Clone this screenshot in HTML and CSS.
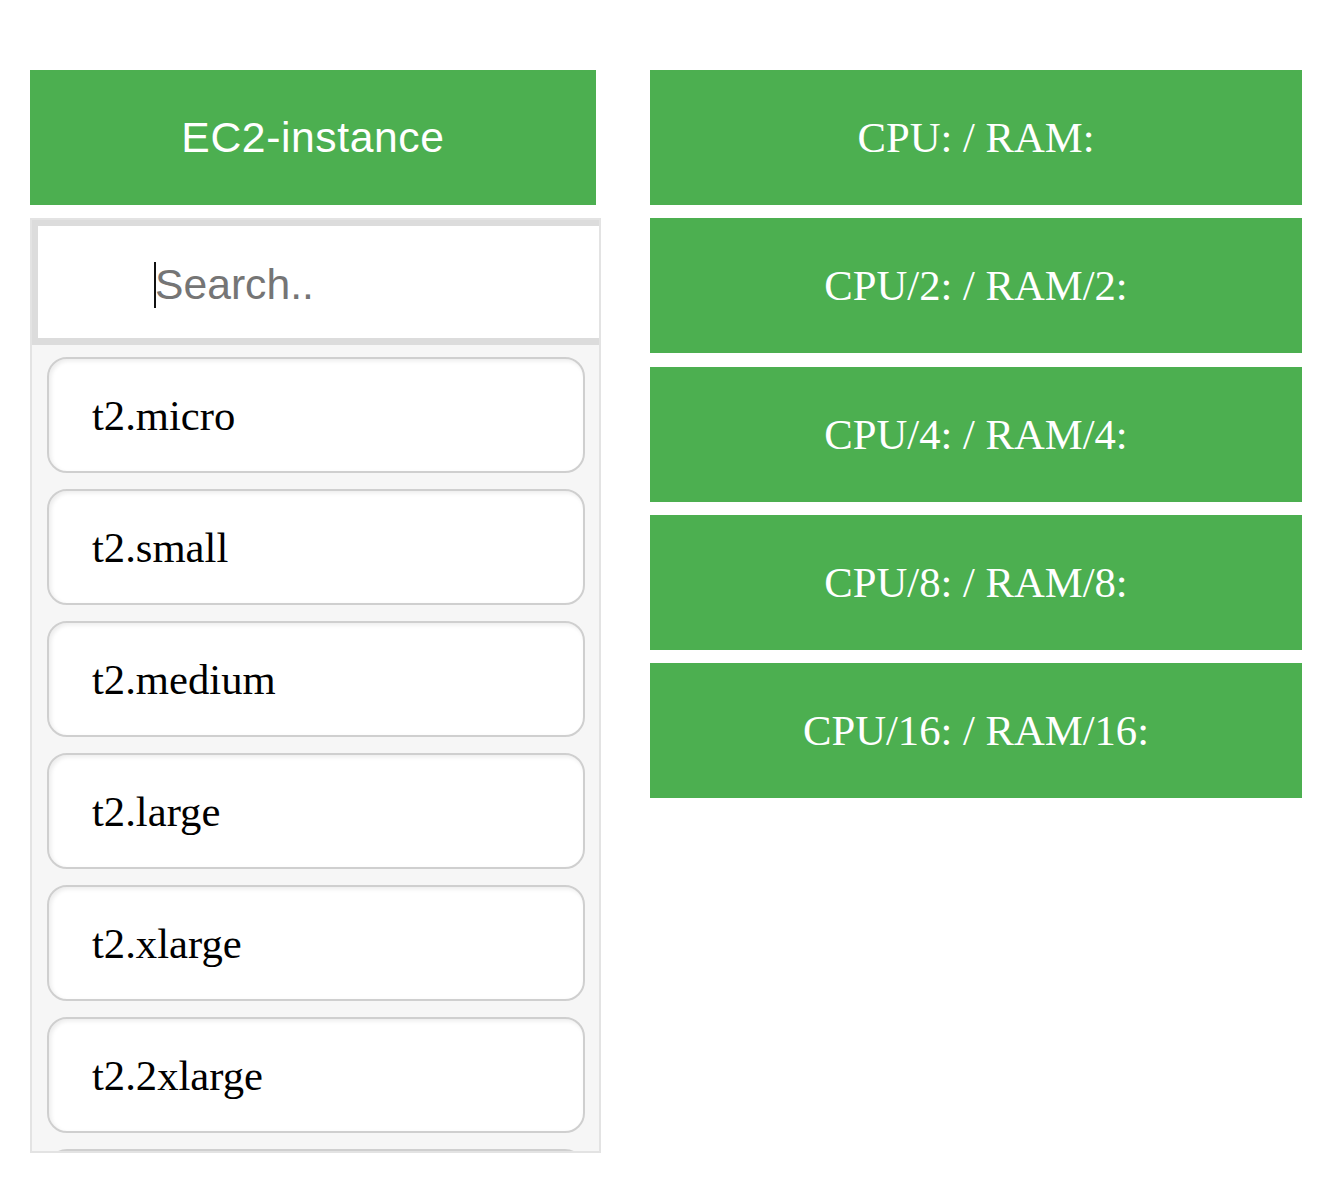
FILE: index.html
```html
<!DOCTYPE html>
<html lang="en">
<head>
    <meta charset="UTF-8">
    <meta name="viewport" content="width=device-width, initial-scale=1.0">
    <title>EC2 instance picker</title>
    <link rel="stylesheet" href="styles.css">
</head>
<body>

<div class="page">
    <div class="picker">
        <div class="title">EC2-instance</div>
        <div class="dropdown">
            <div class="search-wrap">
                <input type="text" class="search" placeholder="Search..">
                <span class="caret"></span>
            </div>
            <div class="options">
                <div class="option">t2.micro</div>
                <div class="option">t2.small</div>
                <div class="option">t2.medium</div>
                <div class="option">t2.large</div>
                <div class="option">t2.xlarge</div>
                <div class="option">t2.2xlarge</div>
                <div class="option"></div>
            </div>
        </div>
    </div>

    <div class="specs">
        <div class="spec">CPU: / RAM:</div>
        <div class="spec">CPU/2: / RAM/2:</div>
        <div class="spec">CPU/4: / RAM/4:</div>
        <div class="spec">CPU/8: / RAM/8:</div>
        <div class="spec">CPU/16: / RAM/16:</div>
    </div>
</div>

</body>
</html>
```

FILE: styles.css
```css
body {
    margin: 0;
    background-color: #fff;
    font-family: "Liberation Serif", "Times New Roman", serif;
}

.page {
    display: flex;
    align-items: flex-start;
    gap: 49px;
    padding: 70px 28px 0 30px;
}

.picker {
    width: 571px;
    flex-shrink: 0;
}

.title {
    width: 566px;
    height: 135px;
    margin-bottom: 13px;
    display: flex;
    align-items: center;
    justify-content: center;
    background-color: #4caf50;
    color: white;
    font-family: "Liberation Sans", Arial, sans-serif;
    font-size: 32pt;
    letter-spacing: 0.6px;
}

.dropdown {
    box-sizing: border-box;
    height: 935px;
    background-color: #f6f6f6;
    border: 2px solid #e3e3e3;
    overflow: hidden;
}

.search-wrap {
    position: relative;
}

.search {
    display: block;
    box-sizing: border-box;
    width: 100%;
    height: 125px;
    margin: 0;
    padding: 4px 0 0 117px;
    border-style: solid;
    border-color: #dcdcdc;
    border-width: 6px 0 7px 6px;
    outline: none;
    background: white;
    font-family: "Liberation Sans", Arial, sans-serif;
    font-size: 32pt;
    caret-color: transparent;
}

.search::placeholder {
    color: #757575;
}

.caret {
    position: absolute;
    left: 122px;
    top: 42px;
    width: 2px;
    height: 46px;
    background-color: #111;
}

.options {
    padding: 12px 14px 0 15px;
}

.option {
    box-sizing: border-box;
    height: 116px;
    margin-bottom: 16px;
    padding-left: 43px;
    display: flex;
    align-items: center;
    background-color: white;
    border: 2px solid #cfcfcf;
    border-radius: 20px;
    box-shadow: inset 2px 2px 4px rgba(0, 0, 0, 0.08);
    color: #000;
    font-size: 32pt;
}

.specs {
    flex: 1;
    display: flex;
    flex-direction: column;
    gap: 13.3px;
}

.spec {
    height: 135px;
    display: flex;
    align-items: center;
    justify-content: center;
    background-color: #4caf50;
    color: white;
    font-size: 32pt;
}
```
